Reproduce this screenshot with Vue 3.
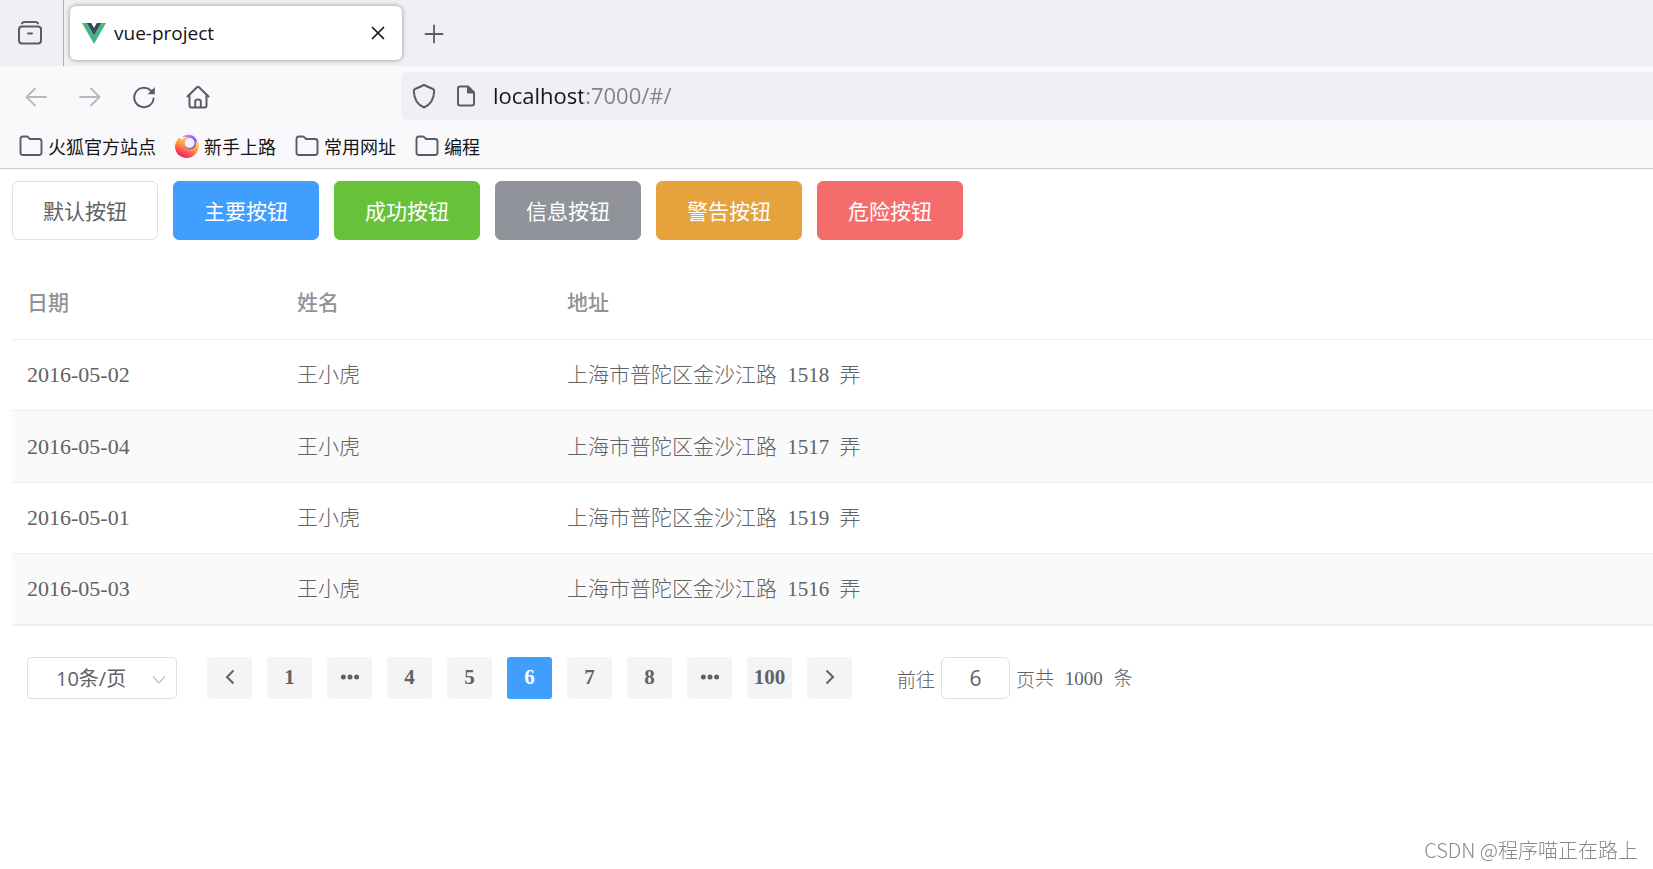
<script setup>
import { ref } from 'vue'

const address = ref('localhost:7000/#/')
const bookmarks = [
  { label: '火狐官方站点', kind: 'folder' },
  { label: '新手上路', kind: 'firefox' },
  { label: '常用网址', kind: 'folder' },
  { label: '编程', kind: 'folder' },
]
const buttons = [
  { label: '默认按钮', type: 'default' },
  { label: '主要按钮', type: 'primary' },
  { label: '成功按钮', type: 'success' },
  { label: '信息按钮', type: 'info' },
  { label: '警告按钮', type: 'warning' },
  { label: '危险按钮', type: 'danger' },
]
const rows = [
  { date: '2016-05-02', name: '王小虎', road: '上海市普陀区金沙江路', no: 1518 },
  { date: '2016-05-04', name: '王小虎', road: '上海市普陀区金沙江路', no: 1517 },
  { date: '2016-05-01', name: '王小虎', road: '上海市普陀区金沙江路', no: 1519 },
  { date: '2016-05-03', name: '王小虎', road: '上海市普陀区金沙江路', no: 1516 },
]
const pages = [1, 'prev-more', 4, 5, 6, 7, 8, 'next-more', 100]
const current = ref(6)
const jump = ref('6')
const size = ref('10')

function go(page) {
  if (typeof page === 'number') {
    current.value = page
    jump.value = String(page)
  }
}
</script>

<template>
  <div class="window">
    <header class="chrome">
      <div class="tabs">
        <div class="view">
          <button class="icon" aria-label="Firefox View">
            <svg width="26" height="26" viewBox="0 0 26 26" fill="none" stroke="#5b5b66" stroke-width="2" stroke-linecap="round">
              <path d="M5 3.4Q5.5 2 7.5 2H18.500Q20.500 2 21 3.400" />
              <rect x="2" y="6.500" width="22" height="17" rx="3" />
              <path d="M11 13.500H15" />
            </svg>
          </button>
        </div>
        <div class="tab">
          <svg width="24" height="21" viewBox="0 0 24 21">
            <path d="M0 0H4.800L12 12.500 19.200 0H24L12 21Z" fill="#41b883" />
            <path d="M4.800 0H9.200L12 5 14.800 0H19.200L12 12.500Z" fill="#35495e" />
          </svg>
          <span class="title">vue-project</span>
          <button class="icon" aria-label="关闭标签页">
            <svg width="14" height="14" viewBox="0 0 14 14" stroke="#15141a" stroke-width="1.700" stroke-linecap="round">
              <path d="M1.500 1.500L12.500 12.500M12.500 1.500L1.500 12.500" />
            </svg>
          </button>
        </div>
        <button class="icon add" aria-label="新建标签页">
          <svg width="20" height="20" viewBox="0 0 20 20" stroke="#5b5b66" stroke-width="1.800" stroke-linecap="round">
            <path d="M10 1.500V18.500M1.500 10H18.500" />
          </svg>
        </button>
      </div>

      <nav class="nav">
        <div class="moves">
          <button class="icon" aria-label="后退">
            <svg width="24" height="24" viewBox="0 0 24 24" fill="none" stroke="#b8b8bf" stroke-width="1.800" stroke-linecap="round" stroke-linejoin="round">
              <path d="M22 12H2.500M11 3.500L2.500 12 11 20.500" />
            </svg>
          </button>
          <button class="icon" aria-label="前进">
            <svg width="24" height="24" viewBox="0 0 24 24" fill="none" stroke="#b8b8bf" stroke-width="1.800" stroke-linecap="round" stroke-linejoin="round">
              <path d="M2 12H21.500M13 3.500L21.500 12 13 20.500" />
            </svg>
          </button>
          <button class="icon" aria-label="刷新">
            <svg width="24" height="24" viewBox="0 0 24 24" fill="none" stroke="#5b5b66" stroke-width="2" stroke-linecap="round">
              <path d="M21.600 13.500A9.700 9.700 0 1 1 18.500 5.300L20 6.700" />
              <path d="M22.800 2V9.300H15.500Z" fill="#5b5b66" stroke="none" />
            </svg>
          </button>
          <button class="icon" aria-label="主页">
            <svg width="24" height="24" viewBox="0 0 24 24" fill="none" stroke="#5b5b66" stroke-width="2" stroke-linecap="round" stroke-linejoin="round">
              <path d="M1.500 11.500L11 2.200Q12 1.300 13 2.200L22.500 11.500" />
              <path d="M3.500 10.500V20.500Q3.500 22.500 5.500 22.500H18.500Q20.500 22.500 20.500 20.500V10.500" />
              <path d="M9.200 22V16.500Q9.200 14.500 12 14.500T14.800 16.500V22" />
            </svg>
          </button>
        </div>
        <div class="url">
          <svg width="24" height="26" viewBox="0 0 24 26" fill="none" stroke="#5b5b66" stroke-width="2" stroke-linejoin="round">
            <path d="M12 2Q13 2 14 3L21 6Q22.300 6.500 22.200 8C22 15 20 21 12 24.500C4 21 2 15 1.800 8Q1.700 6.500 3 6L10 3Q11 2 12 2Z" />
          </svg>
          <svg width="20" height="22" viewBox="0 0 20 22" fill="none" stroke="#5b5b66" stroke-width="2" stroke-linejoin="round">
            <path d="M12 1.500H4Q2 1.500 2 3.500V18.500Q2 20.500 4 20.500H16Q18 20.500 18 18.500V7.500Z" />
            <path d="M11.500 1.500V8H18Z" fill="#5b5b66" stroke="none" />
            <path d="M12 2V7.500H17.500Z" fill="#5b5b66" />
          </svg>
          <input v-model="address" aria-label="地址栏" spellcheck="false" />
        </div>
      </nav>

      <div class="bookmarks">
        <a v-for="b in bookmarks" :key="b.label" href="#">
          <svg v-if="b.kind === 'folder'" width="24" height="22" viewBox="0 0 24 22" fill="none" stroke="#5b5b66" stroke-width="1.900" stroke-linejoin="round">
            <path d="M1.500 4Q1.500 1.500 4 1.500H7.500Q8.500 1.500 9.200 2.200L11 4H20Q22.500 4 22.500 6.500V17.500Q22.500 20 20 20H4Q1.500 20 1.500 17.500Z" />
          </svg>
          <svg v-else width="24" height="24" viewBox="0 0 24 24">
            <defs>
              <linearGradient id="fire" x1="0.800" y1="0.100" x2="0.300" y2="1">
                <stop offset="0" stop-color="#ffe14d" />
                <stop offset="0.450" stop-color="#ff9640" />
                <stop offset="0.750" stop-color="#ff4555" />
                <stop offset="1" stop-color="#f5156c" />
              </linearGradient>
              <linearGradient id="globe" x1="0" y1="0" x2="1" y2="0.600">
                <stop offset="0" stop-color="#d9a0ff" />
                <stop offset="1" stop-color="#7542e5" />
              </linearGradient>
            </defs>
            <path d="M7 2.500C13 -1 21 0 22.500 9L20 16 17 5Z" fill="url(#globe)" />
            <path d="M4 3.500L6.500 5.500C9 3.500 12 3 14 4C20 6 22 9 23.700 9C25 17 19 24 12 24C5 24 0 19 0 12.500C0 9 2 6.500 4 3.500Z" fill="url(#fire)" />
            <circle cx="15" cy="9.500" r="5.800" fill="url(#globe)" />
            <circle cx="14.600" cy="9" r="4.900" fill="#f4f0ff" />
          </svg>
          <span>{{ b.label }}</span>
        </a>
      </div>
    </header>

    <main class="page">
      <div class="buttons">
        <button v-for="b in buttons" :key="b.type" class="btn" :class="b.type">{{ b.label }}</button>
      </div>

      <table class="table">
        <colgroup>
          <col class="narrow" />
          <col class="narrow" />
          <col />
        </colgroup>
        <thead>
          <tr><th>日期</th><th>姓名</th><th>地址</th></tr>
        </thead>
        <tbody>
          <tr v-for="r in rows" :key="r.date">
            <td class="date">{{ r.date }}</td>
            <td>{{ r.name }}</td>
            <td>{{ r.road }} <span class="num">{{ r.no }}</span> 弄</td>
          </tr>
        </tbody>
      </table>

      <div class="pagination">
        <div class="sizes">
          <select v-model="size" aria-label="每页条数">
            <option value="10">10条/页</option>
            <option value="20">20条/页</option>
          </select>
          <svg width="14" height="10" viewBox="0 0 14 10" fill="none" stroke="#c0c4cc" stroke-width="1.400">
            <path d="M1 1.500L7 8 13 1.500" />
          </svg>
        </div>
        <div class="pager">
          <button class="pg" aria-label="上一页" @click="go(current - 1)">
            <svg width="10" height="16" viewBox="0 0 10 16" fill="none" stroke="#606266" stroke-width="2">
              <path d="M8.500 1.500L2 8 8.500 14.500" />
            </svg>
          </button>
          <button v-for="p in pages" :key="p" class="pg" :class="{ active: p === current }" @click="go(p)">
            <template v-if="typeof p === 'number'">{{ p }}</template>
            <svg v-else width="20" height="6" viewBox="0 0 20 6" fill="#606266">
              <circle cx="3.400" cy="3" r="2.500" />
              <circle cx="10" cy="3" r="2.500" />
              <circle cx="16.600" cy="3" r="2.500" />
            </svg>
          </button>
          <button class="pg" aria-label="下一页" @click="go(current + 1)">
            <svg width="10" height="16" viewBox="0 0 10 16" fill="none" stroke="#606266" stroke-width="2">
              <path d="M1.500 1.500L8 8 1.500 14.500" />
            </svg>
          </button>
        </div>
        <label class="jump">前往<input v-model="jump" />页</label>
        <span class="total">共 <span class="num">1000</span> 条</span>
      </div>
    </main>

    <div class="mark">CSDN @程序喵正在路上</div>
  </div>
</template>

<style>
body {
  margin: 0;
  background: #fff;
}
</style>

<style scoped>
.window {
  min-height: 100vh;
  overflow-x: hidden;
  font-family: "Open Sans", "Noto Sans CJK SC", sans-serif;
  color: #15141a;
}
svg {
  display: block;
  flex: none;
}
button,
input,
select {
  font: inherit;
  margin: 0;
  box-sizing: border-box;
}
.icon {
  display: grid;
  place-items: center;
  padding: 0;
  border: 0;
  background: none;
}
.chrome {
  background: #f9f9fb;
  border-bottom: 1px solid #ccc;
}
.tabs {
  display: flex;
  align-items: center;
  height: 66px;
  background: #f0f0f4;
}
.view {
  display: flex;
  align-items: center;
  align-self: stretch;
  padding: 0 20px 0 17px;
  border-right: 1px solid #b0b0b5;
}
.tab {
  display: flex;
  align-items: center;
  box-sizing: border-box;
  width: 332px;
  height: 54px;
  margin-left: 6px;
  padding: 0 17px 0 12px;
  border-radius: 6px;
  background: #fff;
  box-shadow: 0 0 5px rgba(0, 0, 0, 0.4);
}
.title {
  flex: 1;
  margin-left: 8px;
  font-size: 19px;
}
.add {
  margin-left: 22px;
  padding-top: 2px;
}
.nav {
  display: flex;
  align-items: center;
  padding-top: 6px;
}
.moves {
  display: flex;
  gap: 30px;
  width: 401px;
  box-sizing: border-box;
  padding: 2px 0 0 24px;
}
.url {
  display: flex;
  flex: 1;
  align-items: center;
  height: 48px;
  padding-left: 11px;
  border-radius: 6px 0 0 6px;
  background: #f0f0f4;
}
.url svg + svg {
  margin-left: 20px;
}
.url input {
  flex: 1;
  height: 40px;
  margin-left: 17px;
  padding: 0 0 2px;
  border: 0;
  outline: 0;
  font-size: 22px;
  color: transparent;
  caret-color: #15141a;
  background: linear-gradient(to right, #15141a 90px, #808087 90px);
  background-clip: text;
  -webkit-background-clip: text;
}
.bookmarks {
  display: flex;
  align-items: center;
  gap: 19px;
  height: 48px;
  padding: 4px 0 0 19px;
  box-sizing: border-box;
}
.bookmarks a {
  display: flex;
  align-items: center;
  gap: 5px;
  color: #15141a;
  font-size: 18px;
  text-decoration: none;
}
.page {
  padding: 12px 0 0 12px;
}
.buttons {
  display: flex;
  gap: 15px;
}
.btn {
  height: 59px;
  padding: 0 30px 2px;
  border: 1px solid;
  border-radius: 6px;
  font-size: 21px;
  color: #fff;
}
.default {
  color: #606266;
  background: #fff;
  border-color: #dcdfe6;
}
.primary {
  background: #409eff;
  border-color: #409eff;
}
.success {
  background: #67c23a;
  border-color: #67c23a;
}
.info {
  background: #909399;
  border-color: #909399;
}
.warning {
  background: #e6a23c;
  border-color: #e6a23c;
}
.danger {
  background: #f56c6c;
  border-color: #f56c6c;
}
.table,
.pagination {
  font-family: "Liberation Serif", "Noto Sans CJK SC", serif;
  color: #606266;
}
.table {
  width: 100%;
  margin-top: 28px;
  border-collapse: separate;
  border-spacing: 0;
  table-layout: fixed;
  font-size: 21px;
  line-height: 30px;
}
.narrow {
  width: 270px;
}
th,
td {
  height: 71px;
  box-sizing: border-box;
  padding: 0 15px;
  border-bottom: 1px solid #ebeef5;
  text-align: left;
  font-weight: 300;
}
th {
  height: 72px;
  padding-bottom: 2px;
  color: #909399;
  font-weight: 500;
}
tbody tr:nth-child(even) td {
  height: 72px;
  background: #fafafa;
}
tbody tr:last-child td {
  border-bottom-width: 2px;
}
.date {
  font-size: 22px;
}
.num {
  padding: 0 5px;
}
.pagination {
  display: flex;
  align-items: center;
  margin-top: 31px;
  padding-left: 15px;
  font-size: 19px;
}
.sizes {
  position: relative;
}
.sizes select {
  display: block;
  width: 150px;
  height: 42px;
  padding: 0 36px 0 28px;
  appearance: none;
  border: 1px solid #dcdfe6;
  border-radius: 4px;
  background: #fff;
  color: #606266;
  font-family: "Open Sans", "Noto Sans CJK SC", sans-serif;
  font-size: 20px;
}
.sizes svg {
  position: absolute;
  top: 18px;
  right: 11px;
  pointer-events: none;
}
.pager {
  display: flex;
  gap: 15px;
  margin-left: 30px;
}
.pg {
  display: grid;
  place-items: center;
  width: 45px;
  height: 42px;
  padding: 0 0 2px;
  border: 0;
  border-radius: 3px;
  background: #f4f4f5;
  color: #606266;
  font-size: 21px;
  font-weight: 700;
}
.pg.active {
  background: #409eff;
  color: #fff;
}
.jump {
  display: flex;
  align-items: center;
  margin-left: 45px;
  font-weight: 300;
}
.jump input {
  width: 69px;
  height: 42px;
  margin: 0 6px;
  padding: 0;
  border: 1px solid #dcdfe6;
  border-radius: 6px;
  background: #fff;
  color: #606266;
  font-family: "Open Sans", "Noto Sans CJK SC", sans-serif;
  font-size: 21px;
  font-weight: 400;
  text-align: center;
}
.total {
  padding-bottom: 4px;
  font-weight: 300;
}
.total .num {
  padding: 0 6px;
}
.mark {
  position: fixed;
  right: 15px;
  bottom: 5px;
  font-family: "Noto Sans CJK SC", sans-serif;
  font-size: 20px;
  line-height: 28px;
  font-weight: 300;
  color: #888;
}
</style>
